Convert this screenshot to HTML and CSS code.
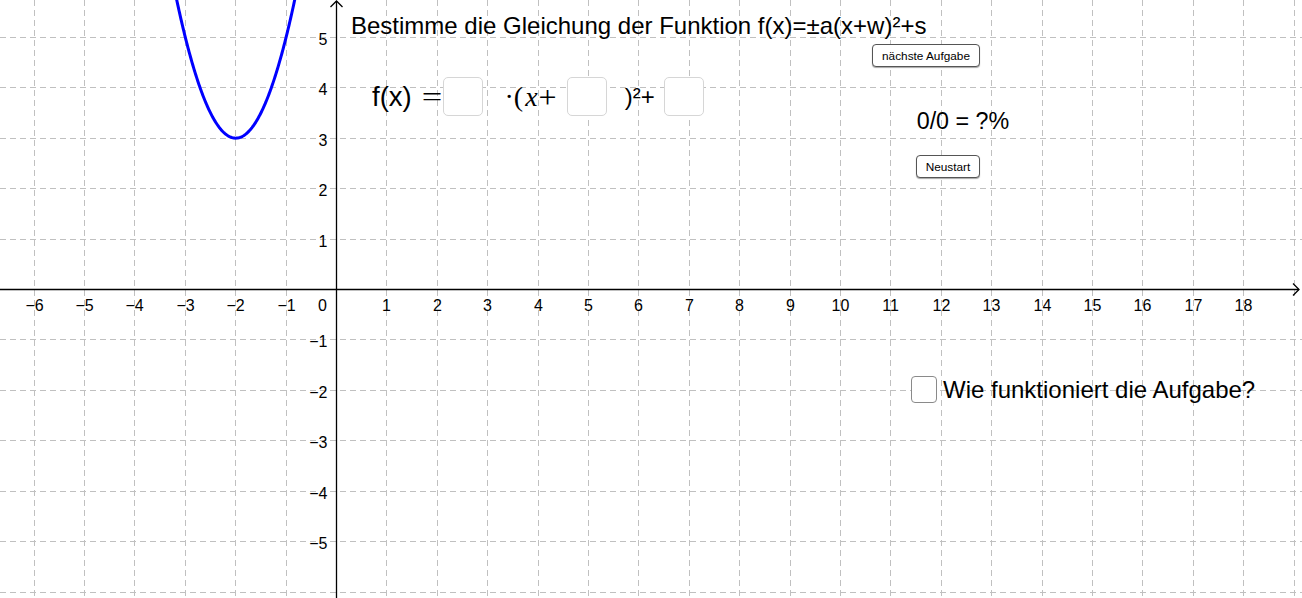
FILE: index.html
```html
<!DOCTYPE html>
<html lang="de">
<head>
    <meta charset="UTF-8">
    <meta name="viewport" content="width=device-width, initial-scale=1.0">
    <title>Scheitelpunktform</title>
    <link rel="stylesheet" href="styles.css">
</head>
<body>

<div class="applet">
    <svg class="graphics" id="graphics" width="1302" height="598" xmlns="http://www.w3.org/2000/svg">
        <g id="grid" class="grid"></g>
        <g class="axes">
            <line x1="0" y1="289.5" x2="1299" y2="289.5"/>
            <polyline points="1293,283.5 1299,289.5 1293,295.5"/>
            <line x1="336.5" y1="1" x2="336.5" y2="598"/>
            <polyline points="330.5,7 336.5,1 342.5,7"/>
        </g>
        <g id="labels" class="labels"></g>
        <path id="curve" class="curve" d=""/>
    </svg>

    <div class="title">Bestimme die Gleichung der Funktion f(x)=±a(x+w)²+s</div>

    <div class="formula">
        <span class="fx">f(x)</span>
        <span class="tex eq">=</span>
        <input class="box" type="text" id="a">
        <span class="tex cdot">·(</span><span class="tex var">x</span><span class="tex plus">+</span>
        <input class="box box-w" type="text" id="w">
        <span class="sq">)²+</span>
        <input class="box box-s" type="text" id="s">
    </div>

    <button class="btn btn-next" type="button">nächste Aufgabe</button>
    <div class="score">0/0 = ?%</div>
    <button class="btn btn-restart" type="button">Neustart</button>

    <label class="help">
        <input type="checkbox" class="help-input">
        <span class="check"></span>
        <span>Wie funktioniert die Aufgabe?</span>
    </label>
</div>

<script>
    // Koordinatensystem: Ursprung und Einheit in Pixeln
    const ox = 336, oy = 289, ux = 50.4, uy = 50.45;
    const svgNS = 'http://www.w3.org/2000/svg';

    function px(x) { return Math.round(ox + ux * x) + 0.5; }
    function py(y) { return Math.round(oy - uy * y) + 0.5; }

    function add(parent, tag, attrs, text) {
        const el = document.createElementNS(svgNS, tag);
        for (const k in attrs) el.setAttribute(k, attrs[k]);
        if (text) el.textContent = text;
        parent.appendChild(el);
        return el;
    }

    const grid = document.getElementById('grid');
    const labels = document.getElementById('labels');

    // Gitterlinien (gestrichelt)
    for (let k = -6; k <= 19; k++) {
        if (k === 0) continue;
        add(grid, 'line', { x1: px(k), y1: 0, x2: px(k), y2: 598 });
    }
    for (let k = -6; k <= 5; k++) {
        if (k === 0) continue;
        add(grid, 'line', { x1: 0, y1: py(k), x2: 1302, y2: py(k) });
    }

    // Beschriftung der x-Achse
    for (let k = -6; k <= 18; k++) {
        if (k === 0) continue;
        const t = k < 0 ? '\u2212' + (-k) : String(k);
        add(labels, 'text', { x: px(k), y: 311, 'text-anchor': 'middle' }, t);
    }
    add(labels, 'text', { x: 327, y: 311, 'text-anchor': 'end' }, '0');

    // Beschriftung der y-Achse
    for (let k = -5; k <= 5; k++) {
        if (k === 0) continue;
        const t = k < 0 ? '\u2212' + (-k) : String(k);
        add(labels, 'text', { x: 327.5, y: py(k) + 7.5, 'text-anchor': 'end' }, t);
    }

    // Graph von f(x) = 2(x+2)^2 + 3
    const f = x => 2 * (x + 2) * (x + 2) + 3;
    let d = '';
    for (let sx = 160; sx <= 310; sx += 0.5) {
        const x = (sx - ox - 0.5) / ux;
        const sy = oy + 0.5 - uy * f(x);
        if (sy < -20) continue;
        d += (d ? ' L ' : 'M ') + sx.toFixed(1) + ' ' + sy.toFixed(2);
    }
    document.getElementById('curve').setAttribute('d', d);
</script>

</body>
</html>
```

FILE: styles.css
```css
body {
    margin: 0;
    background-color: #fff;
    font-family: "Liberation Sans", Arial, sans-serif;
    color: #000;
    overflow: hidden;
}
.applet {
    position: relative;
    width: 1302px;
    height: 598px;
    overflow: hidden;
    background-color: #fff;
}
.graphics {
    position: absolute;
    left: 0;
    top: 0;
}
.grid line {
    stroke: #c0c0c0;
    stroke-width: 1;
    stroke-dasharray: 6 4;
}
.axes line, .axes polyline {
    stroke: #000;
    stroke-width: 1.3;
    fill: none;
}
.labels text {
    font-family: "Liberation Sans", Arial, sans-serif;
    font-size: 16px;
    fill: #000;
}
.curve {
    fill: none;
    stroke: #0000ff;
    stroke-width: 3;
    stroke-linejoin: round;
}

.title, .score, .help {
    position: absolute;
    line-height: 1;
    white-space: nowrap;
}
.title {
    left: 351px;
    top: 14.4px;
    font-size: 24px;
}
.score {
    left: 916.7px;
    top: 109.6px;
    font-size: 23.3px;
}

/* Eingabezeile f(x) = a·(x+w)²+s */
.formula {
    position: absolute;
    left: 372px;
    top: 77px;
    height: 39px;
    display: flex;
    align-items: center;
}
.fx {
    font-size: 27.5px;
    line-height: 1;
}
.tex {
    font-family: "Liberation Serif", "Times New Roman", serif;
    font-size: 28px;
    line-height: 1;
}
.eq {
    margin-left: 12px;
    margin-right: 3px;
    transform: scaleX(1.3);
}
.cdot {
    margin-left: 22px;
}
.var {
    font-style: italic;
    margin: 0 1px 0 2px;
}
.plus {
    font-size: 32px;
}
.sq {
    font-size: 24px;
    line-height: 1;
    margin-left: 19px;
    margin-right: 10px;
}
.box {
    width: 40px;
    height: 39px;
    box-sizing: border-box;
    margin: 0;
    padding: 0;
    border: 1px solid #d6d6d6;
    border-radius: 5px;
    background-color: #fff;
    outline: none;
}
.box-w {
    margin-left: 10px;
}
.box-w + .sq {
    margin-left: 18px;
    margin-right: 9px;
}

.btn {
    position: absolute;
    height: 23px;
    box-sizing: border-box;
    padding: 0;
    border: 1px solid #555;
    border-radius: 4px;
    background-color: #fff;
    box-shadow: 0 1px 1px rgba(0, 0, 0, 0.35);
    font-family: "Liberation Sans", Arial, sans-serif;
    font-size: 11.8px;
    color: #000;
    cursor: pointer;
}
.btn-next {
    left: 872px;
    top: 44px;
    width: 108px;
}
.btn-restart {
    left: 916px;
    top: 155px;
    width: 64px;
}

.help {
    left: 911px;
    top: 376px;
    display: flex;
    align-items: center;
    font-size: 24px;
    cursor: pointer;
}
.help-input {
    display: none;
}
.check {
    width: 26px;
    height: 27px;
    box-sizing: border-box;
    border: 1.5px solid #8a8a8a;
    border-radius: 4px;
    background-color: #fff;
    margin-right: 6px;
}
```
